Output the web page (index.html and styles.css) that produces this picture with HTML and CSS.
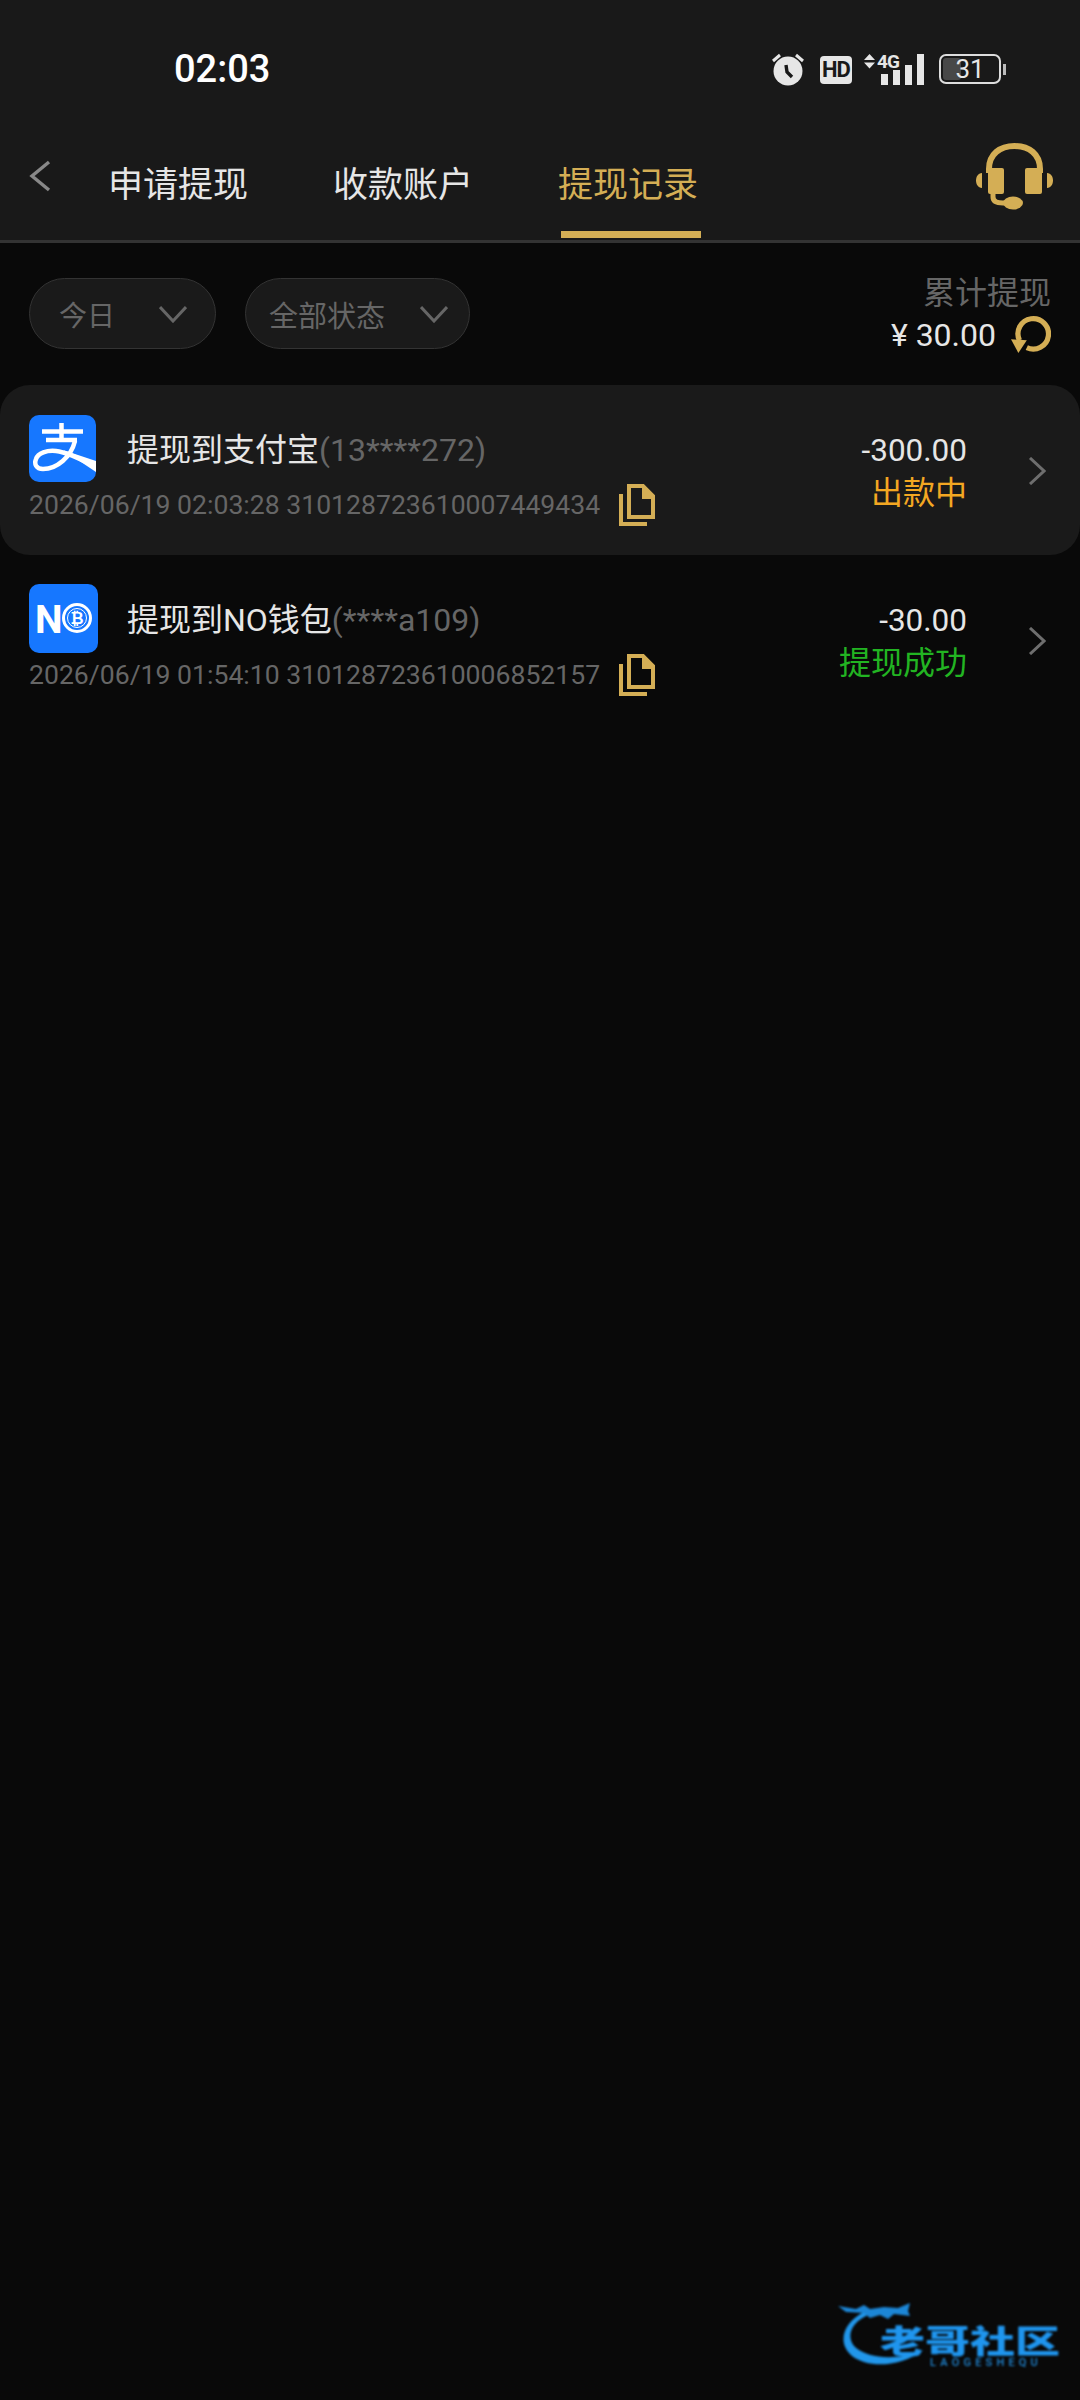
FILE: index.html
```html
<!DOCTYPE html>
<html lang="zh-CN">
<head>
<meta charset="utf-8">
<title>提现记录</title>
<link rel="stylesheet" href="styles.css">
</head>
<body>
<div class="page">
  <header class="header">
    <div class="statusbar">
      <span class="time">02:03</span>
      <div class="status-icons">
        <svg class="ic-alarm" width="32" height="33" viewBox="0 0 32 33"><circle cx="16" cy="18" r="14.500" fill="#e6e6e6"/><path d="M1 8 L8 2 M31 8 L24 2" stroke="#e6e6e6" stroke-width="3"/><path d="M14 12 L15 19 L20 24" stroke="#191919" stroke-width="3.400" fill="none"/></svg>
        <span class="hd">HD</span>
        <svg class="ic-signal" width="60" height="39" viewBox="0 -6 60 39"><path d="M0 7 L5.500 1 L11 7 Z M0 9.500 H11 L5.500 15.500 Z" fill="#e6e6e6"/><text x="13" y="15" class="net">4G</text><rect x="17" y="21" width="7" height="11" fill="#e6e6e6"/><rect x="29" y="17" width="7" height="15" fill="#e6e6e6"/><rect x="41" y="12" width="7" height="20" fill="#e6e6e6"/><rect x="53" y="1" width="7" height="31" fill="#e6e6e6"/></svg>
        <div class="battery"><span class="batt-fill"></span><span class="batt-num">31</span></div>
      </div>
    </div>
    <nav class="nav">
      <svg class="back" width="22" height="32" viewBox="0 0 22 32"><path d="M20 2 L3 16 L20 30" fill="none" stroke="#888" stroke-width="3.400"/></svg>
      <a class="tab">申请提现</a>
      <a class="tab">收款账户</a>
      <a class="tab active">提现记录</a>
      <svg class="headset" width="77" height="68" viewBox="0 0 77 68" fill="#d4ae55"><path d="M13 30 V26 C13 11 24 3 38.500 3 C53 3 64 11 64 26 V30" fill="none" stroke="#d4ae55" stroke-width="6"/><rect x="12" y="25" width="16" height="26" rx="2"/><rect x="49" y="25" width="17" height="26" rx="2"/><path d="M6 30 V45 C2 45 0 41 0 37.500 C0 34 2 30 6 30 Z M71 30 V45 C75 45 77 41 77 37.500 C77 34 75 30 71 30 Z"/><path d="M17 50 V54 C17 58 20 60 27 60 H32" fill="none" stroke="#d4ae55" stroke-width="5"/><ellipse cx="37" cy="60" rx="10" ry="6.500"/></svg>
    </nav>
  </header>

  <section class="toolbar">
    <div class="pill pill-day"><span>今日</span><svg class="pill-chev" width="28" height="18" viewBox="0 0 28 18"><path d="M1 2 L14 16 L27 2" fill="none" stroke="#666" stroke-width="3"/></svg></div>
    <div class="pill pill-state"><span>全部状态</span><svg class="pill-chev" width="28" height="18" viewBox="0 0 28 18"><path d="M1 2 L14 16 L27 2" fill="none" stroke="#666" stroke-width="3"/></svg></div>
    <div class="total">
      <div class="total-label">累计提现</div>
      <div class="total-value"><span>¥ 30.00</span>
        <svg width="40" height="40" viewBox="0 0 38 38"><path d="M8 25 A14.500 14.500 0 1 1 15 32" fill="none" stroke="#d4ae55" stroke-width="5"/><path d="M0 24 L15 25 L7 37 Z" fill="#d4ae55"/></svg>
      </div>
    </div>
  </section>

  <ul class="list">
    <li class="row row-active">
      <div class="main">
        <div class="head">
          <svg class="logo" width="67" height="67" viewBox="0 0 67 67"><rect width="67" height="67" rx="10" fill="#1677ff"/><path d="M13 16.500 H54 M17 25 H48 M32.500 8 V25" stroke="#fff" stroke-width="4.500" fill="none"/><path d="M46 26 C42 42 28 54 14 54 C7 54 5 49 7 44 C9 38 18 35 27 36 C36 37 46 41 67 52" fill="none" stroke="#fff" stroke-width="4.500"/><path d="M34 35 L67 46 V57 Z" fill="#fff"/></svg>
          <div class="title">提现到支付宝<span class="acct">(13****272)</span></div>
        </div>
        <div class="meta">
          <span>2026/06/19 02:03:28 310128723610007449434</span>
          <svg class="copy" width="36" height="42" viewBox="0 0 36 42"><path d="M2 10 V40 H28" fill="none" stroke="#d4ae55" stroke-width="4"/><path d="M10 2 H24 L34 12 V33 H10 Z" fill="none" stroke="#d4ae55" stroke-width="4"/><path d="M23 1 L36 12 V15 H23 Z" fill="#d4ae55"/></svg>
        </div>
      </div>
      <div class="amounts"><div class="amount">-300.00</div><div class="state state-pending">出款中</div></div>
      <svg class="chev" width="18" height="28" viewBox="0 0 18 28"><path d="M2 1 L16 14 L2 27" fill="none" stroke="#6e6e6e" stroke-width="3"/></svg>
    </li>
    <li class="row">
      <div class="main">
        <div class="head">
          <svg class="logo" width="69" height="69" viewBox="0 0 69 69"><rect width="69" height="69" rx="10" fill="#1677ff"/><text x="6" y="49" class="logo-n">N</text><circle cx="48" cy="34" r="13.500" fill="none" stroke="#fff" stroke-width="3"/><circle cx="48" cy="34" r="9.500" fill="none" stroke="#fff" stroke-width="1"/><text x="48" y="39.500" class="logo-b">₿</text></svg>
          <div class="title">提现到NO钱包<span class="acct">(****a109)</span></div>
        </div>
        <div class="meta">
          <span>2026/06/19 01:54:10 310128723610006852157</span>
          <svg class="copy" width="36" height="42" viewBox="0 0 36 42"><path d="M2 10 V40 H28" fill="none" stroke="#d4ae55" stroke-width="4"/><path d="M10 2 H24 L34 12 V33 H10 Z" fill="none" stroke="#d4ae55" stroke-width="4"/><path d="M23 1 L36 12 V15 H23 Z" fill="#d4ae55"/></svg>
        </div>
      </div>
      <div class="amounts"><div class="amount">-30.00</div><div class="state state-ok">提现成功</div></div>
      <svg class="chev" width="18" height="28" viewBox="0 0 18 28"><path d="M2 1 L16 14 L2 27" fill="none" stroke="#6e6e6e" stroke-width="3"/></svg>
    </li>
  </ul>

  <div class="watermark">
    <svg class="wm-art" width="100" height="70" viewBox="0 0 100 70"><path d="M26 12 C6 22 -2 42 14 56 C30 68 60 68 86 50 C62 60 32 60 17 47 C7 36 14 22 30 15 Z" fill="#2196ea"/><path d="M0 6 L18 9 L26 5 L32 9 L46 7 L60 8 L72 3 L70 11 L72 16 L56 14 L50 19 L42 15 L32 18 L26 13 L8 12 Z" fill="#1c86d6"/></svg>
    <div class="wm-name">老哥社区</div>
    <div class="wm-sub">LAOGESHEQU</div>
  </div>
</div>
</body>
</html>
```
FILE: styles.css
```css
* { box-sizing: border-box; }
html, body { margin: 0; padding: 0; background: #090909; }
body { font-family: Roboto, "Noto Sans CJK SC", sans-serif; }
.page { position: relative; width: 1080px; height: 2400px; overflow: hidden; background: #090909; color: #e6e6e6; }

.header { height: 243px; background: #191919; border-bottom: 3px solid #333; }
.statusbar { height: 100px; display: flex; align-items: flex-start; padding: 44px 73px 0 174px; justify-content: space-between; }
.time { font-size: 38px; font-weight: 500; color: #fff; line-height: 50px; }
.status-icons { display: flex; align-items: flex-start; margin-top: 9px; height: 34px; margin-right: 4px; }
.ic-alarm { margin-right: 16px; }
.hd { width: 32px; height: 28px; margin: 3px 12px 0 0; background: #e6e6e6; border-radius: 4px; color: #191919; font: 700 22px/28px Roboto, sans-serif; text-align: center; letter-spacing: -1px; }
.ic-signal { margin: -6px 17px 0 0; }
.net { font: 700 19px Roboto, sans-serif; fill: #e6e6e6; letter-spacing: -1px; }
.battery { position: relative; width: 62px; height: 30px; margin: 1px 2px 0 -2px; border: 2.500px solid #ddd; border-radius: 7px; display: flex; align-items: center; justify-content: center; }
.battery::after { content: ""; position: absolute; right: -7px; top: 8px; width: 3px; height: 11px; background: #bbb; }
.batt-fill { position: absolute; left: 2px; top: 2px; bottom: 2px; width: 18px; background: #484848; border-radius: 3px; }
.batt-num { position: relative; font-size: 26px; line-height: 26px; color: #e6e6e6; }

.nav { display: flex; align-items: flex-start; height: 137px; padding: 0 27px 0 29px; }
.back { margin: 60px 57px 0 0; }
.tab { position: relative; height: 138px; padding-top: 61px; line-height: 50px; font-size: 35px; color: #e6e6e6; margin-right: 85px; }
.tab.active { color: #d4ae55; margin-right: 0; }
.tab.active::after { content: ""; position: absolute; left: 3px; bottom: 0; width: 140px; height: 7px; background: #d4ae55; }
.headset { margin: 43px 0 0 auto; }

.toolbar { display: flex; align-items: flex-start; height: 142px; padding: 35px 29px 0 29px; }
.pill { display: flex; align-items: center; height: 71px; border-radius: 36px; background: #1a1a1a; border: 1.500px solid #333; color: #666; font-size: 28px; }
.pill-day { width: 187px; padding-left: 29px; margin-right: 29px; }
.pill-state { width: 225px; padding-left: 23px; font-size: 29px; }
.pill-chev { margin-left: auto; }
.pill-day .pill-chev { margin-right: 28px; }
.pill-state .pill-chev { margin-right: 21px; }
.total { margin-left: auto; margin-top: -3px; display: flex; flex-direction: column; align-items: flex-end; }
.total-label { font-size: 32px; line-height: 36px; color: #666; }
.total-value { display: flex; align-items: center; gap: 15px; font-size: 32px; line-height: 40px; color: #e6e6e6; margin-top: 3px; }
.total-value span { position: relative; top: 1px; }

.list { list-style: none; margin: 0; padding: 0; }
.row { display: flex; height: 170px; padding: 30px 34px 0 29px; }
.row-active { background: #1a1a1a; border-radius: 30px; }
.main { display: flex; flex-direction: column; }
.head { display: flex; align-items: center; height: 67px; }
.logo { flex: none; margin-right: 31px; }
.row + .row .logo { margin-right: 29px; }
.title { font-size: 32px; line-height: 44px; color: #e6e6e6; margin-top: 2px; }
.acct { color: #666; }
.meta { display: flex; align-items: center; gap: 19px; margin-top: 2px; font-size: 26.600px; color: #666; line-height: 42px; }
.copy { flex: none; }
.amounts { margin-left: auto; margin-top: 15px; text-align: right; line-height: 42px; }
.amount { font-size: 31.500px; color: #e6e6e6; }
.state { font-size: 32px; }
.state-pending { color: #f3a722; }
.state-ok { color: #22b422; }
.chev { flex: none; margin: 42px 0 0 61px; }
.logo-n { font: 700 39px Roboto, sans-serif; fill: #fff; }
.logo-b { font: 700 16px "DejaVu Sans", sans-serif; fill: #fff; text-anchor: middle; }

.watermark { position: absolute; left: 838px; top: 2296px; width: 230px; height: 80px; filter: blur(0.8px); }
.wm-art { position: absolute; left: 0; top: 4px; }
.wm-name { position: absolute; left: 42px; top: 25px; font: 900 45px/36px "Noto Sans CJK SC", sans-serif; color: #1f95ee; white-space: nowrap; transform: scaleY(0.72); }
.wm-sub { position: absolute; left: 92px; top: 61px; font: 500 11px/12px Roboto, sans-serif; letter-spacing: 4.200px; color: #2088d6; white-space: nowrap; }
```
